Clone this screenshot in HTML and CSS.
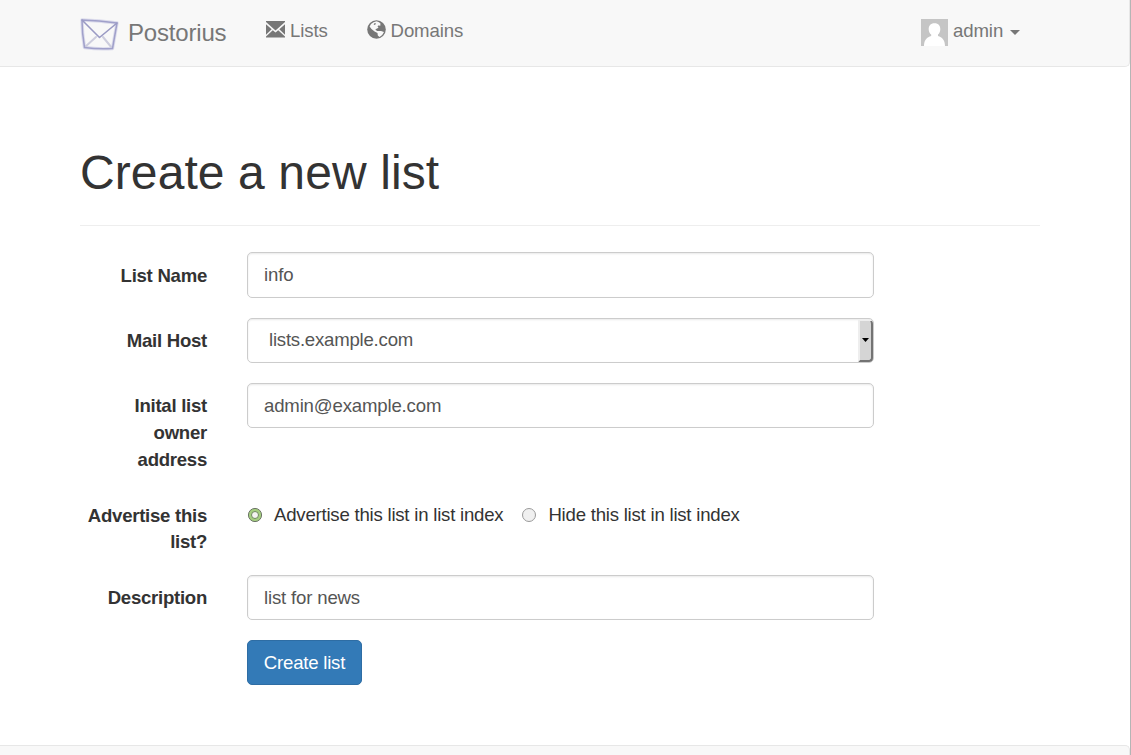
FILE: index.html
```html
<!DOCTYPE html>
<html lang="en">
<head>
<meta charset="utf-8">
<title>Postorius</title>
<link rel="stylesheet" href="styles.css">
</head>
<body>
<div class="page">
<header class="navbar">
  <a class="brand">
    <svg class="logo" width="42" height="36" viewBox="0 0 42 36" fill="none" stroke-linecap="round" stroke-linejoin="round">
      <path d="M3 4 Q20 4.500 38 7 L33.500 32.500 Q20 33.500 5.500 31.500 Q3 17 3 4Z" stroke="#dcdcec" stroke-width="3.400"/>
      <path d="M17 21 L6 31 M24 21 L33 32" stroke="#cdcddd" stroke-width="2"/>
      <path d="M3 4 Q20 4.500 38 7 L33.500 32.500 Q20 33.500 5.500 31.500 Q3 17 3 4Z" stroke="#a0a0ca" stroke-width="1.500"/>
      <path d="M3 4 L20.500 21.500 L38 7" stroke="#9a9ac4" stroke-width="1.600"/>
    </svg>
    <span class="brand-name">Postorius</span>
  </a>
  <nav class="nav">
    <a class="nav-item">
      <svg class="nav-icon" width="19" height="17" viewBox="0 0 19 17" fill="#777"><path d="M0 0H19V1L9.500 9.500L0 1Z M0 3.300L5.700 8.300L0 13.700Z M19 3.300L13.300 8.300L19 13.700Z M0 16.500V15.400L6.800 9.300L9.500 11.600L12.200 9.300L19 15.400V16.500Z"/></svg>
      <span class="lists-text">Lists</span>
    </a>
    <a class="nav-item">
      <svg class="nav-icon globe" width="19" height="19" viewBox="0 0 19 19"><circle cx="9.500" cy="9.500" r="9.300" fill="#777"/><path d="M6.500 2.200L9.500 1.300L12 2.300L13.500 3.500L13.200 6L11.800 5.300L10.500 6.500L11.500 7.800L9.500 8.700L8.300 9.800L10.300 11L14 11L17 12L15.200 15L12.500 17L10.800 15.500L10.500 13L7.600 11.500L4.500 9L2.600 6.500L4 4Z" fill="#f8f8f8"/><path d="M7.700 3L9 3.500L8 5L6.600 4.600Z" fill="#777"/></svg>
      <span class="domains-text">Domains</span>
    </a>
  </nav>
  <a class="user">
    <svg class="avatar" width="27" height="27" viewBox="0 0 27 27"><path fill="#c5c5c5" d="M0 0H27V27H0Z"/><path fill="#fff" d="M13.500 4.300C17.500 4.300 19.500 7 19.300 10.500C19.100 13 18.300 14.500 17 15.600V17C21 18 24 21 24 27H3C3 21 6 18 10.200 17V15.600C8.700 14.500 7.900 13 7.700 10.500C7.500 7 9.500 4.300 13.500 4.300Z"/></svg>
    <span class="admin-text">admin</span>
    <span class="caret"></span>
  </a>
</header>
<main class="content">
  <h1 class="title"><span class="title-text">Create a new list</span></h1>
  <form class="form">
    <div class="row name-row"><label class="label">List Name</label><div class="field">info</div></div>
    <div class="row host-row"><label class="label">Mail Host</label><div class="field select"><span>lists.example.com</span><span class="drop"><svg width="7" height="4" viewBox="0 0 7 4"><path d="M0 0H7L3.500 4Z"/></svg></span></div></div>
    <div class="row owner-row"><label class="label">Inital list<br>owner<br>address</label><div class="field">admin@example.com</div></div>
    <div class="row advertise-row"><label class="label">Advertise this<br>list?</label>
      <div class="choices">
        <span class="choice"><svg width="16" height="16" viewBox="0 0 16 16"><circle cx="8" cy="8" r="6.600" fill="#a5cf80" stroke="#6d7567" stroke-width="1"/><circle cx="8" cy="8" r="3.500" fill="#f4f4f2" stroke="#70895e" stroke-width="1"/></svg><span>Advertise this list in list index</span></span>
        <span class="choice"><svg width="16" height="16" viewBox="0 0 16 16"><circle cx="8" cy="8" r="6.500" fill="#f0f0f0" stroke="#9a9a9a" stroke-width="1"/></svg><span>Hide this list in list index</span></span>
      </div>
    </div>
    <div class="row description-row"><label class="label">Description</label><div class="field">list for news</div></div>
    <button class="submit" type="button">Create list</button>
  </form>
</main>
<footer class="footer"></footer>
</div>
</body>
</html>
```
FILE: styles.css
```css
* { box-sizing: border-box; }
body {
  margin: 0;
  background: #fff;
  color: #333;
  font: 18.6px/27px "Liberation Sans", Arial, sans-serif;
  overflow: hidden;
}
.page {
  display: flex;
  flex-direction: column;
  height: 755px;
  border-right: 1px solid #b5b5b5;
}
.navbar {
  display: flex;
  align-items: flex-start;
  height: 67px;
  padding-left: 80px;
  background: #f8f8f8;
  border: solid #e7e7e7;
  border-width: 0 1px 1px 0;
  border-bottom-right-radius: 5px;
  color: #777;
  white-space: nowrap;
}
.brand { display: flex; width: 186px; padding-top: 16px; }
.logo { margin: 0 6px 0 -1px; }
.brand-name { margin-left: 1px; font-size: 24px; line-height: 34px; letter-spacing: -.18px; }
.nav { display: flex; padding-top: 17px; letter-spacing: -.13px; }
.nav-item { display: flex; gap: 5px; margin-right: 39px; }
.nav-icon { margin-top: 4px; }
.globe { margin-top: 3px; }
.user { display: flex; margin-left: auto; width: 208px; padding-top: 19px; }
.avatar { margin-right: 5px; }
.admin-text { margin-top: -2px; letter-spacing: -.1px; }
.caret {
  margin: 11px 0 0 6.5px;
  width: 0;
  height: 0;
  border: solid transparent;
  border-width: 5px 5px 0;
  border-top-color: #777;
}
.content { width: 960px; margin-left: 80px; flex: 1; }
.title {
  margin: 0;
  height: 159px;
  padding-top: 79px;
  border-bottom: 1px solid #eee;
  font-size: 48px;
  font-weight: 400;
  line-height: 53px;
  letter-spacing: .1px;
}
.form { padding-top: 26px; letter-spacing: -.22px; }
.row { display: flex; align-items: flex-start; }
.name-row { height: 66px; }
.host-row { height: 65px; }
.owner-row { height: 110px; }
.advertise-row { height: 82px; }
.description-row { height: 65px; }
.label {
  width: 127px;
  margin-right: 40px;
  padding-top: 9px;
  font-weight: 700;
  text-align: right;
  white-space: nowrap;
  letter-spacing: -.27px;
}
.name-row .label { padding-top: 10px; }
.advertise-row .label { line-height: 26px; padding-top: 10px; }
.field {
  display: flex;
  align-items: center;
  width: 627px;
  height: 45px;
  padding: 0 16px;
  border: 1px solid #ccc;
  border-radius: 5px;
  box-shadow: inset 0 1px 2px rgba(0, 0, 0, .09);
  color: #555;
  letter-spacing: -.17px;
}
.name-row .field { height: 46px; padding-bottom: 2px; }
.select { justify-content: space-between; padding: 0 0 0 21px; letter-spacing: -.22px; }
.select > span:first-child { padding-bottom: 2px; }
.drop {
  display: flex;
  align-items: center;
  justify-content: center;
  width: 15px;
  height: 42px;
  padding-right: 1px;
  background: #d5d5d5;
  border: solid;
  border-width: 1px 2px 2px;
  border-color: #eee #737373 #737373 #eee;
  border-radius: 0 4px 4px 0;
}
.choices { display: flex; gap: 18px; padding-top: 8px; white-space: nowrap; }
.choice { display: flex; align-items: center; gap: 11px; }
.submit {
  display: block;
  width: 115px;
  height: 45px;
  margin-left: 167px;
  padding: 0;
  background: #337ab7;
  border: 1px solid #2e6da4;
  border-radius: 5px;
  color: #fff;
  font: inherit;
  letter-spacing: -.22px;
}
.footer {
  height: 10px;
  background: #f8f8f8;
  border: solid #e7e7e7;
  border-width: 1px 1px 0 0;
  border-top-right-radius: 5px;
}
```
